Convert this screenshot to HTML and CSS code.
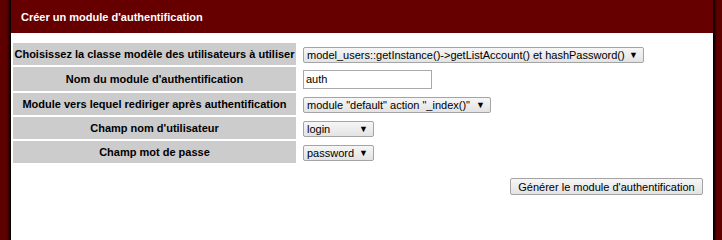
FILE: index.html
```html
<!DOCTYPE html>
<html lang="fr">
<head>
<meta charset="utf-8">
<title>Créer un module d'authentification</title>
<link rel="stylesheet" href="styles.css">
</head>
<body>
<div class="page">
  <h2 class="title">Créer un module d'authentification</h2>
  <form class="form">
    <table class="grid">
      <tr>
        <th>Choisissez la classe modèle des utilisateurs à utiliser</th>
        <td><span class="sel"><select class="w1"><option>model_users::getInstance()-&gt;getListAccount() et hashPassword()</option></select></span></td>
      </tr>
      <tr class="tall">
        <th>Nom du module d'authentification</th>
        <td><input class="txt" type="text" value="auth"></td>
      </tr>
      <tr>
        <th>Module vers lequel rediriger après authentification</th>
        <td><span class="sel"><select class="w3"><option>module "default" action "_index()"</option></select></span></td>
      </tr>
      <tr>
        <th>Champ nom d'utilisateur</th>
        <td><span class="sel"><select class="w4"><option>login</option></select></span></td>
      </tr>
      <tr>
        <th>Champ mot de passe</th>
        <td><span class="sel"><select class="w4"><option>password</option></select></span></td>
      </tr>
    </table>
    <div class="actions">
      <button type="button" class="btn">Générer le module d'authentification</button>
    </div>
  </form>
</div>
</body>
</html>
```
FILE: styles.css
```css
html, body {
  margin: 0;
  padding: 0;
  height: 100%;
}
body {
  background: #5e0000;
  font-family: "Liberation Sans", Arial, sans-serif;
  overflow: hidden;
}
.page {
  margin-left: 11px;
  width: 702px;
  min-height: 100vh;
  background: #fff;
  box-shadow: -1px 0 3px 1px #000, 1px 0 2px 1px #000;
}
.title {
  margin: 0;
  height: 33px;
  line-height: 35px;
  padding-left: 10px;
  background: #660000;
  color: #fff;
  font-size: 11px;
  font-weight: bold;
}
.form {
  margin: 0;
  padding-top: 8px;
}
.grid {
  border-spacing: 2px;
  border-collapse: separate;
}
.grid th {
  width: 283px;
  height: 22px;
  padding: 0;
  background: #cccccc;
  color: #000;
  font-size: 11px;
  font-weight: bold;
  text-align: center;
  vertical-align: middle;
  white-space: nowrap;
}
.grid tr.tall th {
  height: 24px;
}
.grid td {
  padding: 0 0 0 5px;
  vertical-align: middle;
  white-space: nowrap;
}
.sel {
  position: relative;
  display: inline-block;
  vertical-align: middle;
}
.sel::after {
  content: "\25BC";
  position: absolute;
  right: 6px;
  top: 50%;
  transform: translateY(-50%);
  font-size: 9px;
  color: #000;
  pointer-events: none;
}
select {
  appearance: none;
  -webkit-appearance: none;
  margin: 0;
  height: 16px;
  padding: 0 15px 0 3px;
  border: 1px solid #a4a4a4;
  border-radius: 2px;
  background: linear-gradient(#f6f6f6, #e3e3e3);
  color: #000;
  font-family: "Liberation Sans", Arial, sans-serif;
  font-size: 11px;
  line-height: 14px;
  display: block;
}
.w1 { width: 341px; }
.w3 { width: 188px; }
.w4 { width: 71px; }
.txt {
  box-sizing: border-box;
  width: 129px;
  height: 19px;
  margin: 0;
  padding: 0 2px;
  border: 1px solid #a9a9a9;
  font-family: "Liberation Sans", Arial, sans-serif;
  font-size: 11px;
  color: #000;
  vertical-align: middle;
}
.actions {
  display: flex;
  justify-content: flex-end;
  padding: 13px 10px 0 0;
}
.btn {
  margin: 0;
  height: 17px;
  padding: 0 6px;
  width: 193px;
  border: 1px solid #a4a4a4;
  border-radius: 2px;
  background: linear-gradient(#f6f6f6, #e3e3e3);
  color: #000;
  font-family: "Liberation Sans", Arial, sans-serif;
  font-size: 11px;
  line-height: 14px;
}
```
